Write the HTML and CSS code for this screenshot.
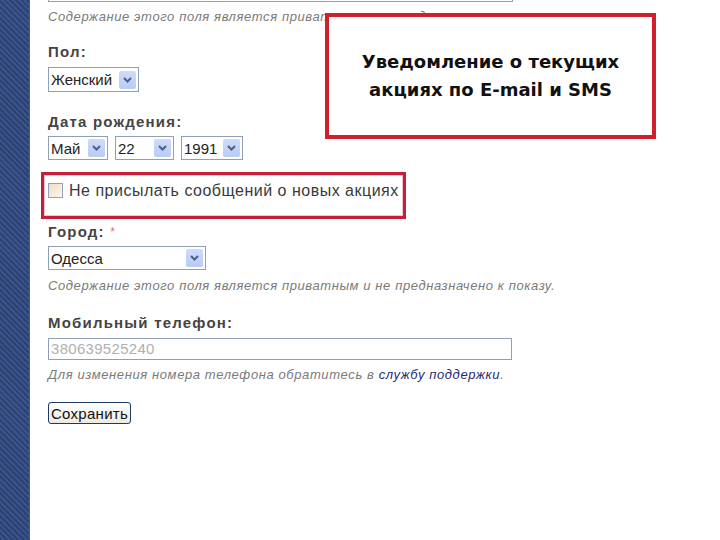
FILE: index.html
```html
<!DOCTYPE html>
<html lang="ru">
  <head>
    <meta charset="UTF-8" />
    <meta name="viewport" content="width=device-width, initial-scale=1.0" />
    <title>Профиль</title>
    <link rel="stylesheet" href="styles.css">
  </head>
  <body>
    <div class="sidebar"></div>

    <div class="content">
      <div class="text-input top-input"></div>
      <p class="hint">Содержание этого поля является приватным и не предназначено к показу.</p>

      <label class="label">Пол:</label>
      <div class="select w-sex">
        <span class="select-value">Женский</span>
        <span class="select-arrow">
          <svg width="9" height="6" viewBox="0 0 9 6"><path d="M1 1 L4.5 4.5 L8 1" fill="none" stroke="#4d5f86" stroke-width="2"/></svg>
        </span>
      </div>

      <label class="label label-date">Дата рождения:</label>
      <div class="date-row">
        <div class="select w-month">
          <span class="select-value">Май</span>
          <span class="select-arrow">
            <svg width="9" height="6" viewBox="0 0 9 6"><path d="M1 1 L4.5 4.5 L8 1" fill="none" stroke="#4d5f86" stroke-width="2"/></svg>
          </span>
        </div>
        <div class="select w-day">
          <span class="select-value">22</span>
          <span class="select-arrow">
            <svg width="9" height="6" viewBox="0 0 9 6"><path d="M1 1 L4.5 4.5 L8 1" fill="none" stroke="#4d5f86" stroke-width="2"/></svg>
          </span>
        </div>
        <div class="select w-year">
          <span class="select-value">1991</span>
          <span class="select-arrow">
            <svg width="9" height="6" viewBox="0 0 9 6"><path d="M1 1 L4.5 4.5 L8 1" fill="none" stroke="#4d5f86" stroke-width="2"/></svg>
          </span>
        </div>
      </div>

      <div class="highlight">
        <span class="checkbox"></span>
        <span class="check-text">Не присылать сообщений о новых акциях</span>
      </div>

      <label class="label label-city">Город: <span class="required">*</span></label>
      <div class="select w-city">
        <span class="select-value">Одесса</span>
        <span class="select-arrow">
          <svg width="9" height="6" viewBox="0 0 9 6"><path d="M1 1 L4.5 4.5 L8 1" fill="none" stroke="#4d5f86" stroke-width="2"/></svg>
        </span>
      </div>
      <p class="hint hint-city">Содержание этого поля является приватным и не предназначено к показу.</p>

      <label class="label label-phone">Мобильный телефон:</label>
      <div class="text-input phone-input">380639525240</div>
      <p class="hint hint-phone">Для изменения номера телефона обратитесь в <a href="#">службу поддержки</a>.</p>

      <button class="save-btn">Сохранить</button>

      <div class="callout">
        <p>Уведомление о текущих<br />акциях по E-mail и SMS</p>
      </div>
    </div>
  </body>
</html>
```

FILE: styles.css
```css
* {
  margin: 0;
  padding: 0;
  box-sizing: border-box;
}

body {
  height: 100vh;
  display: flex;
  overflow: hidden;
  background: white;
  font-family: "Liberation Sans", Arial, sans-serif;
  color: #333;
}

.sidebar {
  width: 30px;
  flex-shrink: 0;
  background: repeating-linear-gradient(45deg, #2b4272 0 2px, #3a5388 2px 4px);
  border-right: 1px solid #3b5f8a;
}

.content {
  position: relative;
  flex: 1;
  padding-left: 18px;
}

.text-input {
  width: 465px;
  height: 22px;
  border: 1px solid #8f9fb8;
  font-size: 15px;
  line-height: 20px;
  padding-left: 2px;
  color: #b0b0b0;
  letter-spacing: 0.3px;
}

.top-input {
  margin-top: -20px;
}

.hint {
  margin-top: 7px;
  font-size: 13px;
  line-height: 16px;
  font-style: italic;
  color: #7a7a7a;
  letter-spacing: 0.6px;
  white-space: nowrap;
}

.hint a {
  color: #1d2a7a;
  text-decoration: none;
}

.label {
  display: block;
  margin-top: 18px;
  font-size: 15px;
  line-height: 18px;
  font-weight: bold;
  color: #444;
  letter-spacing: 1.2px;
}

.label-date {
  margin-top: 21px;
}

.label-city {
  margin-top: 4px;
}

.label-phone {
  margin-top: 20px;
}

.required {
  color: #e07070;
  font-size: 12px;
  font-weight: normal;
  vertical-align: top;
}

.select {
  display: flex;
  align-items: center;
  justify-content: space-between;
  height: 24px;
  margin-top: 5px;
  padding: 0 2px 0 2px;
  border: 1px solid #8f9fb8;
  font-size: 15px;
  color: #222;
}

.w-sex {
  width: 91px;
  height: 25px;
  margin-top: 6px;
}

.w-month {
  width: 60px;
}

.w-day {
  width: 59px;
}

.w-year {
  width: 62px;
}

.w-city {
  width: 158px;
}

.select-arrow {
  width: 17px;
  height: 18px;
  display: flex;
  justify-content: center;
  align-items: center;
  background: linear-gradient(#cddcfb, #b8cbf4);
  border-radius: 2px;
}

.date-row {
  display: flex;
  gap: 7px;
}

.highlight {
  display: flex;
  align-items: flex-start;
  gap: 6px;
  width: 365px;
  height: 47px;
  margin: 12px 0 0 -7px;
  padding: 8px 0 0 4px;
  border: 3px solid #c4203c;
  box-shadow: inset 0 0 0 1px #f3c6cf;
}

.checkbox {
  width: 15px;
  height: 15px;
  flex-shrink: 0;
  border: 1px solid #8ea3bd;
  background: linear-gradient(135deg, #f6dcc0, #fdf6ee);
}

.check-text {
  font-size: 16px;
  line-height: 15px;
  color: #3a3a3a;
  letter-spacing: 0.5px;
  white-space: nowrap;
}

.hint-city {
  margin-top: 8px;
}

.phone-input {
  margin-top: 6px;
  width: 464px;
}

.save-btn {
  display: block;
  margin-top: 19px;
  width: 83px;
  height: 22px;
  border: 1px solid #1c3a64;
  border-radius: 3px;
  background: linear-gradient(#ffffff, #eceae2);
  font-family: "Liberation Sans", Arial, sans-serif;
  font-size: 15px;
  letter-spacing: 0.3px;
  color: #111;
}

/* callout over the form */
.callout {
  position: absolute;
  left: 295px;
  top: 13px;
  width: 331px;
  height: 126px;
  display: flex;
  justify-content: center;
  align-items: center;
  background: white;
  border: 4px solid #d0202e;
}

.callout p {
  font-family: "DejaVu Sans", Verdana, sans-serif;
  font-size: 18px;
  font-weight: bold;
  line-height: 28px;
  text-align: center;
  color: #111;
}
```
